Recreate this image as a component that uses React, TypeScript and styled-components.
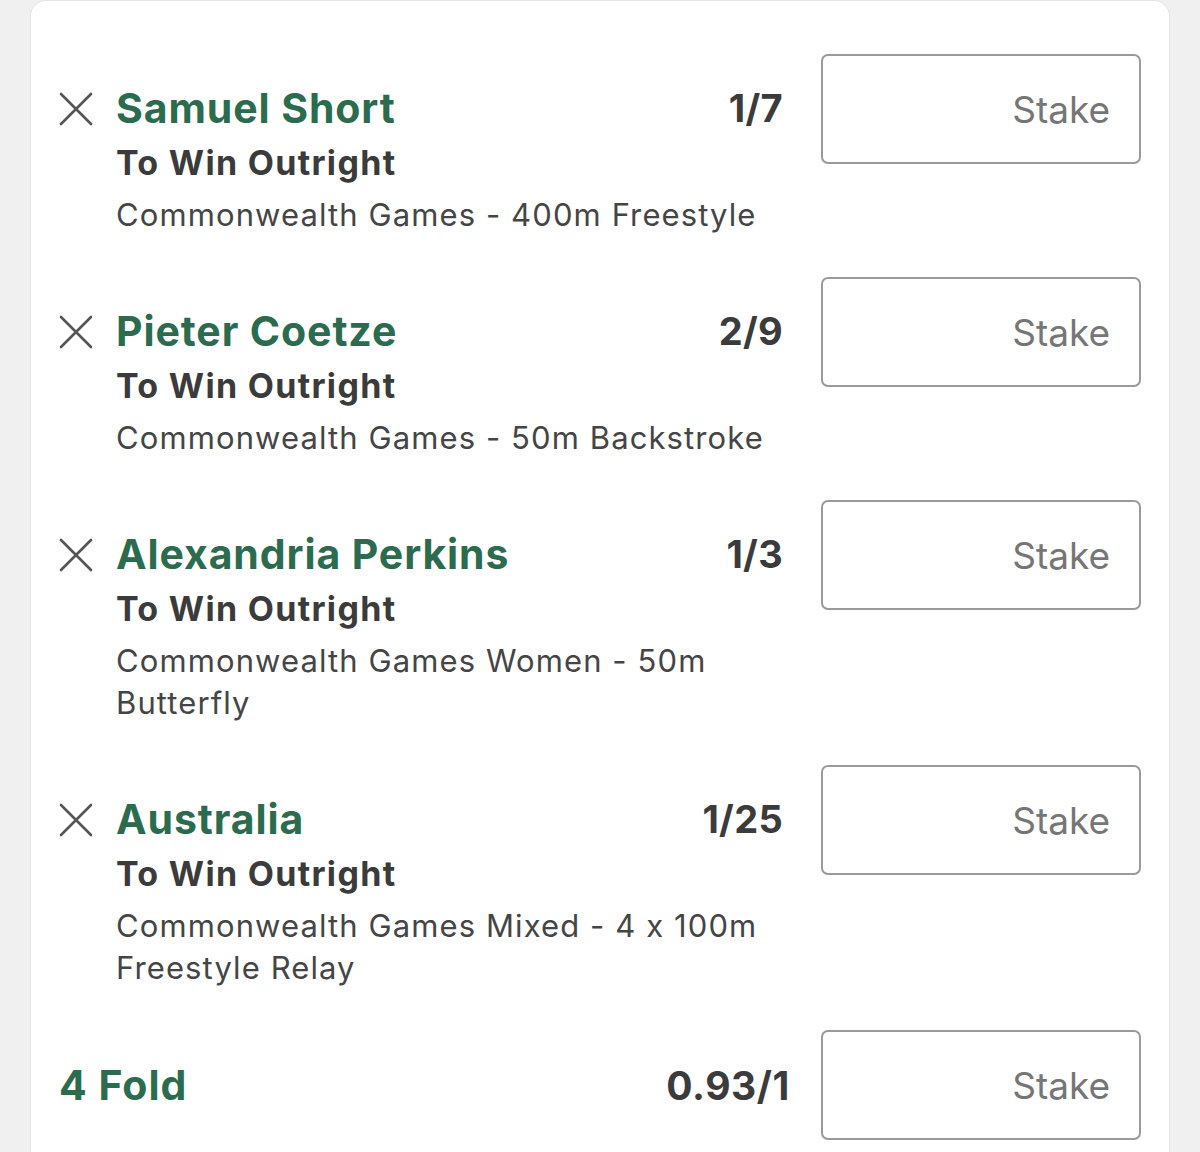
import React from "react";
import styled, { createGlobalStyle } from "styled-components";

const GlobalStyle = createGlobalStyle`
  html, body {
    margin: 0;
    padding: 0;
    background: #f0f0f0;
  }
  body {
    font-family: Inter, "Liberation Sans", Arial, sans-serif;
    -webkit-font-smoothing: antialiased;
  }
`;

const Page = styled.div`
  padding: 0 30px;
  min-height: 1152px;
  box-sizing: border-box;
  display: flex;
`;

const Card = styled.section`
  flex: 1;
  background: #ffffff;
  border: 1px solid #e4e4e4;
  border-bottom: none;
  border-radius: 16px 16px 0 0;
  padding: 53px 28px 0 28px;
  display: flex;
  flex-direction: column;
  gap: 41px;
`;

const SelectionRow = styled.div`
  display: grid;
  grid-template-columns: 57px 1fr 320px;
  column-gap: 38px;
  align-items: start;
`;

const RemoveButton = styled.button`
  width: 57px;
  height: 34px;
  margin-top: 38px;
  padding: 0;
  border: none;
  background: none;
  display: flex;
  align-items: center;
  justify-content: flex-start;
  cursor: pointer;
`;

const Main = styled.div`
  margin-top: 30px;
  margin-left: -38px;
  display: flex;
  flex-direction: column;
  min-width: 0;
`;

const HeadLine = styled.div`
  display: flex;
  justify-content: space-between;
  align-items: center;
  height: 48px;
`;

const Name = styled.span`
  font-size: 41px;
  font-weight: 700;
  color: #2b6c4e;
  letter-spacing: 0.9px;
`;

const Odds = styled.span`
  font-size: 38px;
  font-weight: 700;
  color: #3b3b3b;
  letter-spacing: 0.3px;
`;

const Market = styled.div`
  margin-top: 7px;
  font-size: 34px;
  line-height: 48px;
  font-weight: 700;
  color: #3b3b3b;
  letter-spacing: 1.3px;
`;

const EventName = styled.div`
  margin-top: 7px;
  font-size: 31px;
  line-height: 42px;
  color: #454545;
  letter-spacing: 1.1px;
  padding-right: 16px;
`;

const StakeInput = styled.input`
  width: 320px;
  height: 110px;
  box-sizing: border-box;
  border: 2px solid #9a9a9a;
  border-radius: 7px;
  padding: 0 29px 0 16px;
  text-align: right;
  font-family: inherit;
  font-size: 37px;
  color: #333;
  background: #fff;
  outline: none;
  &::placeholder {
    color: #767676;
  }
`;

const FoldRow = styled.div`
  display: grid;
  grid-template-columns: 1fr auto 320px;
  column-gap: 31px;
  align-items: center;
`;

const FoldLabel = styled(Name)`
  font-size: 41px;
  letter-spacing: 1px;
`;

const FoldOdds = styled(Odds)`
  font-size: 39px;
  letter-spacing: 0.6px;
`;

const CloseIcon = () => (
  <svg width="34" height="34" viewBox="0 0 34 34" aria-hidden="true">
    <path
      d="M2 2 L32 32 M32 2 L2 32"
      stroke="#555555"
      strokeWidth="2.6"
      strokeLinecap="round"
      fill="none"
    />
  </svg>
);

type Selection = {
  name: string;
  odds: string;
  market: string;
  event: string;
};

const selections: Selection[] = [
  {
    name: "Samuel Short",
    odds: "1/7",
    market: "To Win Outright",
    event: "Commonwealth Games - 400m Freestyle",
  },
  {
    name: "Pieter Coetze",
    odds: "2/9",
    market: "To Win Outright",
    event: "Commonwealth Games - 50m Backstroke",
  },
  {
    name: "Alexandria Perkins",
    odds: "1/3",
    market: "To Win Outright",
    event: "Commonwealth Games Women - 50m Butterfly",
  },
  {
    name: "Australia",
    odds: "1/25",
    market: "To Win Outright",
    event: "Commonwealth Games Mixed - 4 x 100m Freestyle Relay",
  },
];

export default function App() {
  return (
    <>
      <GlobalStyle />
      <Page>
        <Card>
          {selections.map((s) => (
            <SelectionRow key={s.name}>
              <RemoveButton aria-label={`Remove ${s.name}`}>
                <CloseIcon />
              </RemoveButton>
              <Main>
                <HeadLine>
                  <Name>{s.name}</Name>
                  <Odds>{s.odds}</Odds>
                </HeadLine>
                <Market>{s.market}</Market>
                <EventName>{s.event}</EventName>
              </Main>
              <StakeInput placeholder="Stake" />
            </SelectionRow>
          ))}
          <FoldRow>
            <FoldLabel>4 Fold</FoldLabel>
            <FoldOdds>0.93/1</FoldOdds>
            <StakeInput placeholder="Stake" />
          </FoldRow>
        </Card>
      </Page>
    </>
  );
}
